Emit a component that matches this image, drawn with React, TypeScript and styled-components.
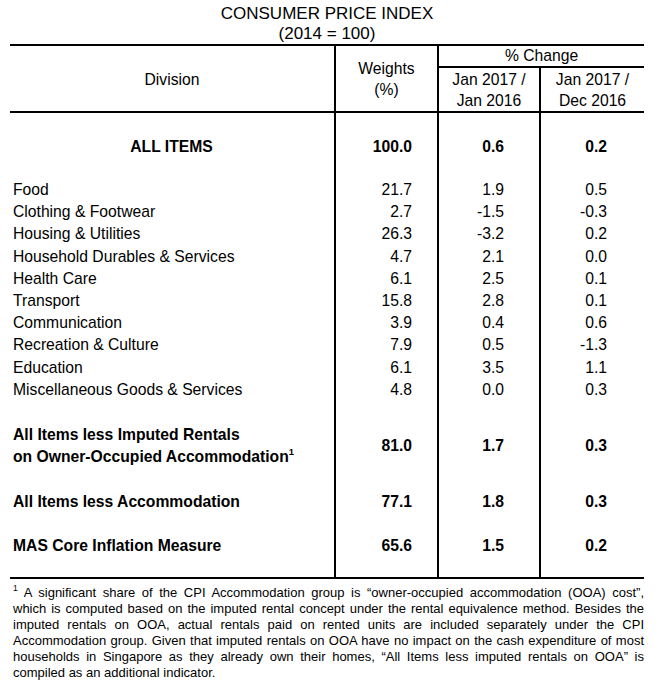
import React from "react";
import styled, { createGlobalStyle } from "styled-components";

const GlobalStyle = createGlobalStyle`
  html, body {
    margin: 0;
    padding: 0;
    background: #ffffff;
  }
  body {
    font-family: "Liberation Sans", Arial, sans-serif;
    color: #000000;
  }
`;

const Page = styled.div`
  width: 634px;
  padding: 3.5px 12px 0 10px;
`;

const Title = styled.div`
  text-align: center;
  font-size: 17px;
  line-height: 20.3px;
`;

const Table = styled.table`
  width: 634px;
  table-layout: fixed;
  border-collapse: separate;
  border-spacing: 0;
  border-top: 2px solid #000;
  border-bottom: 2px solid #000;
  font-size: 15.7px;
`;

const Col = styled.col<{ $w: number }>`
  width: ${(p) => p.$w}px;
`;

const HeadCell = styled.th<{ $divider?: boolean }>`
  font-weight: normal;
  text-align: center;
  vertical-align: middle;
  line-height: 21px;
  padding: 1px 0 0;
  border-bottom: 2px solid #000;
  border-left: ${(p) => (p.$divider ? "2px solid #000" : "none")};
`;

const ChangeCell = styled.th`
  font-weight: normal;
  text-align: center;
  vertical-align: middle;
  height: 20px;
  line-height: 20px;
  padding: 0;
  border-bottom: 2px solid #000;
  border-left: 2px solid #000;
`;

const Row = styled.tr<{ $gap: number; $end?: number; $lh: number; $bold?: boolean }>`
  line-height: ${(p) => p.$lh}px;
  font-weight: ${(p) => (p.$bold ? "bold" : "normal")};
  & > td {
    padding-top: ${(p) => p.$gap}px;
    padding-bottom: ${(p) => p.$end ?? 0}px;
  }
`;

const NameCell = styled.td<{ $center?: boolean }>`
  text-align: ${(p) => (p.$center ? "center" : "left")};
  vertical-align: top;
  padding-left: ${(p) => (p.$center ? 0 : 3)}px;
  white-space: nowrap;
`;

const ValueCell = styled.td<{ $pad: number }>`
  text-align: right;
  vertical-align: middle;
  padding-right: ${(p) => p.$pad}px;
  border-left: 2px solid #000;
  white-space: nowrap;
`;

const Sup = styled.sup`
  font-size: 9.5px;
  line-height: 0;
  vertical-align: 7px;
`;

const Footnote = styled.div`
  margin-top: 6px;
  font-size: 13px;
  line-height: 16px;
`;

const FootLine = styled.div<{ $last?: boolean }>`
  text-align: ${(p) => (p.$last ? "left" : "justify")};
  text-align-last: ${(p) => (p.$last ? "left" : "justify")};
  white-space: nowrap;
  padding-left: 3px;
`;

const FootSup = styled.sup`
  font-size: 8.5px;
  line-height: 0;
  vertical-align: 6px;
  margin-right: 6px;
`;

type Item = { name: React.ReactNode; w: string; a: string; b: string };

const items: Item[] = [
  { name: "Food", w: "21.7", a: "1.9", b: "0.5" },
  { name: "Clothing & Footwear", w: "2.7", a: "-1.5", b: "-0.3" },
  { name: "Housing & Utilities", w: "26.3", a: "-3.2", b: "0.2" },
  { name: "Household Durables & Services", w: "4.7", a: "2.1", b: "0.0" },
  { name: "Health Care", w: "6.1", a: "2.5", b: "0.1" },
  { name: "Transport", w: "15.8", a: "2.8", b: "0.1" },
  { name: "Communication", w: "3.9", a: "0.4", b: "0.6" },
  { name: "Recreation & Culture", w: "7.9", a: "0.5", b: "-1.3" },
  { name: "Education", w: "6.1", a: "3.5", b: "1.1" },
  { name: "Miscellaneous Goods & Services", w: "4.8", a: "0.0", b: "0.3" },
];

const Values: React.FC<{ w: string; a: string; b: string }> = ({ w, a, b }) => (
  <>
    <ValueCell $pad={25}>{w}</ValueCell>
    <ValueCell $pad={35}>{a}</ValueCell>
    <ValueCell $pad={37}>{b}</ValueCell>
  </>
);

const footLines = [
  "A significant share of the CPI Accommodation group is “owner-occupied accommodation (OOA) cost”,",
  "which is computed based on the imputed rental concept under the rental equivalence method. Besides the",
  "imputed rentals on OOA, actual rentals paid on rented units are included separately under the CPI",
  "Accommodation group. Given that imputed rentals on OOA have no impact on the cash expenditure of most",
  "households in Singapore as they already own their homes, “All Items less imputed rentals on OOA” is",
  "compiled as an additional indicator.",
];

export default function App() {
  return (
    <>
      <GlobalStyle />
      <Page>
        <Title>
          CONSUMER PRICE INDEX
          <br />
          (2014 = 100)
        </Title>
        <Table>
          <colgroup>
            <Col $w={324} />
            <Col $w={103} />
            <Col $w={102} />
            <Col $w={105} />
          </colgroup>
          <thead>
            <tr>
              <HeadCell rowSpan={2}>Division</HeadCell>
              <HeadCell rowSpan={2} $divider>
                Weights
                <br />
                (%)
              </HeadCell>
              <ChangeCell colSpan={2}>% Change</ChangeCell>
            </tr>
            <tr>
              <HeadCell $divider>
                Jan 2017 /
                <br />
                Jan 2016
              </HeadCell>
              <HeadCell $divider>
                Jan 2017 /
                <br />
                Dec 2016
              </HeadCell>
            </tr>
          </thead>
          <tbody>
            <Row $gap={22.5} $lh={22} $bold>
              <NameCell $center>ALL ITEMS</NameCell>
              <Values w="100.0" a="0.6" b="0.2" />
            </Row>
            {items.map((it, i) => (
              <Row key={i} $gap={i === 0 ? 21.4 : 0} $lh={22.2}>
                <NameCell>{it.name}</NameCell>
                <Values w={it.w} a={it.a} b={it.b} />
              </Row>
            ))}
            <Row $gap={23} $lh={21.7} $bold>
              <NameCell>
                All Items less Imputed Rentals
                <br />
                on Owner-Occupied Accommodation<Sup>1</Sup>
              </NameCell>
              <Values w="81.0" a="1.7" b="0.3" />
            </Row>
            <Row $gap={24} $lh={22} $bold>
              <NameCell>All Items less Accommodation</NameCell>
              <Values w="77.1" a="1.8" b="0.3" />
            </Row>
            <Row $gap={22} $end={19.5} $lh={22} $bold>
              <NameCell>MAS Core Inflation Measure</NameCell>
              <Values w="65.6" a="1.5" b="0.2" />
            </Row>
          </tbody>
        </Table>
        <Footnote>
          {footLines.map((l, i) => (
            <FootLine key={i} $last={i === footLines.length - 1}>
              {i === 0 && <FootSup>1</FootSup>}
              {l}
            </FootLine>
          ))}
        </Footnote>
      </Page>
    </>
  );
}
